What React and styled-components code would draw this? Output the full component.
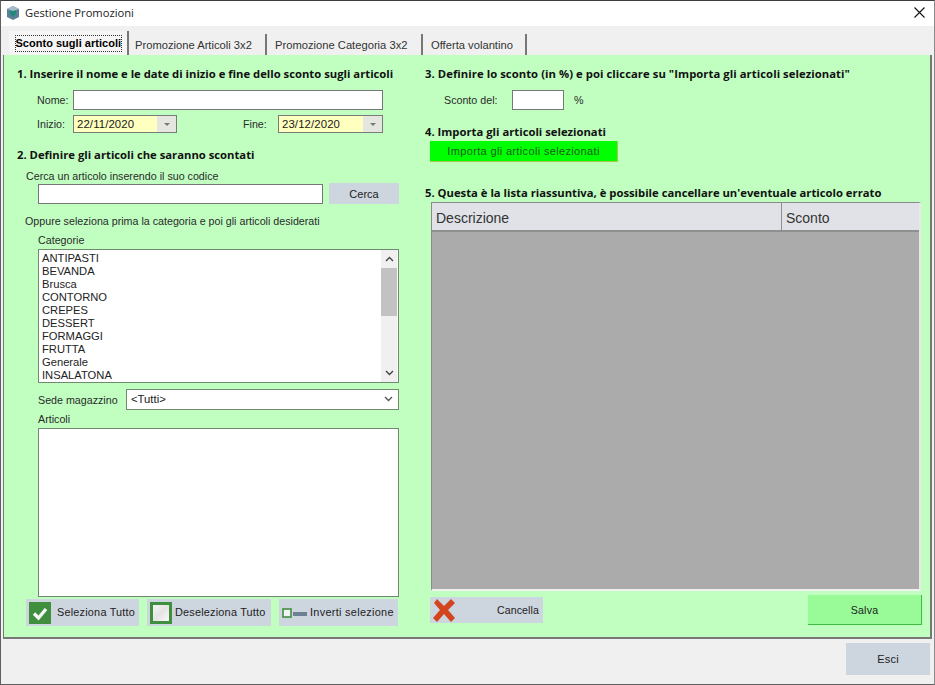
import React from "react";
import styled, { createGlobalStyle } from "styled-components";

const Global = createGlobalStyle`
  html, body { margin: 0; padding: 0; background: #f0f0f0; }
  * { box-sizing: border-box; }
`;
const font = `"Open Sans", "Noto Sans", "Liberation Sans", sans-serif`;

const Win = styled.div`
  width: 935px; height: 685px; display: flex; flex-direction: column;
  border: 1px solid #5f5f5f; border-right-color: #8a8a8a; border-top-color: #3c3c3c;
  background: #f0f0f0; overflow: hidden;
  font-family: "Liberation Sans", Arial, sans-serif; font-size: 11px; color: #1a1a1a;
`;
const TitleBar = styled.div`
  height: 25px; flex: none; background: #fff; display: flex; align-items: center; padding: 0 9px 2px 4px;
`;
const TitleText = styled.span`
  font-family: ${font}; font-size: 11.2px; margin-left: 4px; flex: 1; color: #222;
`;
const TabStrip = styled.div`
  height: 29px; flex: none; display: flex; align-items: flex-end; padding-left: 8px; background: #f0f0f0;
`;
const Tab = styled.div`
  height: ${p => (p.$active ? 24 : 21)}px; width: ${p => p.$w}px; flex: none;
  display: flex; align-items: center; justify-content: ${p => (p.$active ? "center" : "flex-start")};
  padding-left: ${p => p.$pl ?? 0}px;
  border-right: 2px solid #777;
  font-size: 11.2px; color: #333; white-space: nowrap;
  background: ${p => (p.$active ? "#f5f5f5" : "#f0f0f0")};
  font-family: "Liberation Sans", sans-serif;
`;
const ActiveLabel = styled.span`
  font-weight: 700; color: #000; border: 1px dotted #333; width: 107px; height: 17px;
  display: block; line-height: 15px; white-space: nowrap;
  font-size: 11px; letter-spacing: 0.02px;
`;
const Panel = styled.div`
  width: 929px; height: 584px; margin: 0 0 0 2px; flex: none;
  background: #c1ffc1; border-right: 2px solid #777; border-bottom: 2px solid #777; border-left: 1px solid #777;
  display: flex; overflow: hidden;
`;
const LeftCol = styled.div`
  width: 405px; flex: none; padding: 10px 0 0 13px; display: flex; flex-direction: column;
`;
const RightCol = styled.div`
  flex: 1; padding: 10px 0 0 16px; display: flex; flex-direction: column; min-width: 0;
`;
const Heading = styled.div`
  font-family: ${font}; font-weight: 700; font-size: 11.27px; line-height: 18px; height: 16px; color: #111; white-space: nowrap;
  margin-top: ${p => p.$mt ?? 0}px;
  letter-spacing: ${p => p.$ls ?? 0}px;
`;
const Row = styled.div`
  display: flex; align-items: center; height: ${p => p.$h}px; margin-top: ${p => p.$mt ?? 0}px;
  padding-left: ${p => p.$pl ?? 0}px;
`;
const Label = styled.span`
  font-size: 10.7px; color: #2a2a2a; white-space: nowrap; flex: none;
  width: ${p => (p.$w ? p.$w + "px" : "auto")};
  margin-left: ${p => p.$ml ?? 0}px;
`;
const Input = styled.div`
  height: ${p => p.$h ?? 20}px; width: ${p => p.$w}px; flex: none; background: #fff;
  border: 1px solid #767676; margin-left: ${p => p.$ml ?? 0}px;
`;
const DateBox = styled.div`
  height: 18px; width: ${p => p.$w}px; flex: none; display: flex; border: 1px solid #7a7a7a;
  background: #ffffc0; padding-left: 3px; align-items: center;
  font-size: 11.4px; letter-spacing: 0.1px;
`;
const DateBtn = styled.span`
  width: 19px; height: 16px; background: #e6e6e0; margin-left: auto; display: flex; align-items: center; justify-content: center;
  &::after { content: ""; border: 3px solid transparent; border-top: 3px solid #777; margin-top: 3px; }
`;
const GreyBtn = styled.div`
  width: ${p => p.$w}px; height: ${p => p.$h}px; flex: none; background: #cdd5de;
  display: flex; align-items: center; justify-content: center;
  margin-left: ${p => p.$ml ?? 0}px; font-size: 11px; color: #222; white-space: nowrap;
  letter-spacing: ${p => p.$ls ?? 0}px;
`;
const ListBox = styled.div`
  width: 361px; height: ${p => p.$h}px; background: #fff; border: 1px solid #6f8a6f; margin-left: 21px; flex: none;
  display: flex; overflow: hidden;
`;
const Items = styled.div`
  flex: 1; padding: 2px 0 0 3px;
`;
const Item = styled.div`
  height: 13px; line-height: 13px; font-size: 11.2px; color: #222;
`;
const Scroll = styled.div`
  width: 16px; margin-right: 1px; background: #f0f0f0; display: flex; flex-direction: column; align-items: center;
`;
const ScrollArrow = styled.div`
  height: 18px; flex: none; display: flex; align-items: center; justify-content: center;
`;
const Thumb = styled.div`
  width: 100%; height: 48px; background: #c2c2c2; flex: none;
`;
const ScrollGap = styled.div` flex: 1; `;
const Combo = styled.div`
  width: 273px; height: 21px; background: #fff; border: 1px solid #6f8a6f; margin-left: 11px; flex: none;
  display: flex; align-items: center; padding: 0 5px 2px 4px; font-size: 11.3px; justify-content: space-between;
`;
const ToolRow = styled.div`
  display: flex; height: 27px; margin-top: 2px; margin-left: 9px; gap: 8px;
`;
const ToolBtn = styled.div`
  width: ${p => p.$w}px; height: 27px; background: #cdd5de; display: flex; align-items: center; padding-left: 3px;
  font-size: 10.9px; color: #222; flex: none; white-space: nowrap; letter-spacing: ${p => p.$ls ?? 0.2}px;
`;
const ToolText = styled.span` margin-left: ${p => p.$ml}px; margin-top: -2px; `;
const GreenBtn = styled.div`
  width: 188px; height: 21px; background: #00ff00; margin: 2px 0 0 5px; display: flex; align-items: center; justify-content: center;
  font-size: 11px; color: #1c5c1c; letter-spacing: 0.35px; border-bottom: 1px solid #a8c84a; border-right: 1px solid #a8c84a;
`;
const Grid = styled.div`
  width: 490px; height: 389px; margin: 2px 0 0 6px; background: #ababab; border: 1px solid #8b8b8b;
  border-bottom: 2px solid #f0f0f0; border-right: 2px solid #e8e8e8; display: flex; flex-direction: column; flex: none;
`;
const GridHead = styled.div`
  height: 29px; flex: none; display: flex; background: #e0e2e7; border-bottom: 2px solid #8f8f8f;
  font-size: 14px; color: #333;
`;
const GridCol = styled.div`
  width: ${p => p.$w}px; flex: ${p => (p.$w ? "none" : 1)}; display: flex; align-items: center; padding: 2px 0 0 4px;
  border-right: ${p => (p.$w ? "1px solid #8f8f8f" : "none")};
`;
const BottomRow = styled.div`
  display: flex; margin: 4px 0 0 5px; width: 492px; justify-content: space-between; align-items: flex-start;
`;
const CancelBtn = styled.div`
  width: 113px; height: 26px; background: #cdd5de; margin-top: 2px; display: flex; align-items: center; padding-left: 1px;
  font-size: 10.6px; color: #222; letter-spacing: 0.1px;
`;
const CancelText = styled.span` margin-left: auto; margin-right: 4px; margin-top: -1px; `;
const SaveBtn = styled.div`
  width: 114px; height: 30px; background: #98fb98; border-bottom: 1px solid #3fbf3f; border-right: 1px solid #3fbf3f;
  display: flex; align-items: center; justify-content: center; font-size: 10.6px; color: #222; letter-spacing: 0.2px;
`;
const Footer = styled.div`
  flex: 1; display: flex; justify-content: flex-end; padding: 4px 4px 0 0; background: #f0f0f0;
`;

const Logo = () => (
  <svg width="16" height="16" viewBox="0 0 16 16">
    <path d="M8 1l6 3v8l-6 3-6-3V4z" fill="#5f7f96" />
    <path d="M8 4l3 1.5V9L8 12 5 9V5.5z" fill="#1f8a7a" />
    <path d="M8 1l6 3-6 2-6-2z" fill="#a9bccb" />
  </svg>
);
const CloseX = () => (
  <svg width="11" height="11" viewBox="0 0 11 11">
    <path d="M.5.5l10 10M10.5.5l-10 10" stroke="#111" strokeWidth="1.1" fill="none" />
  </svg>
);
const Chev = ({ up, color = "#444", w = 9 }) => (
  <svg width={w} height="6" viewBox="0 0 9 6">
    <path d={up ? "M1 5l3.5-3.5L8 5" : "M1 1l3.5 3.5L8 1"} stroke={color} strokeWidth="1.4" fill="none" />
  </svg>
);
const CheckIcon = () => (
  <svg width="22" height="22" viewBox="0 0 22 22">
    <rect width="22" height="22" fill="#3f8f3f" />
    <path d="M5 11.5l4.5 4.5L17 7" stroke="#f4f7f4" strokeWidth="3.4" fill="none" />
  </svg>
);
const EmptyIcon = () => (
  <svg width="22" height="22" viewBox="0 0 22 22">
    <defs>
      <linearGradient id="eg" x1="0" y1="0" x2="1" y2="1">
        <stop offset="0" stopColor="#f8f8f8" /><stop offset="0.5" stopColor="#e4e4e4" /><stop offset="1" stopColor="#fdfdfd" />
      </linearGradient>
    </defs>
    <rect x="1.5" y="1.5" width="19" height="19" fill="url(#eg)" stroke="#3f8f3f" strokeWidth="3" />
  </svg>
);
const InvertIcon = () => (
  <svg width="26" height="12" viewBox="0 0 26 12">
    <rect x="1" y="2" width="8" height="8" fill="#f2f2f2" stroke="#3f8f3f" strokeWidth="1.6" />
    <rect x="11" y="5" width="14" height="4" fill="#6d8196" />
  </svg>
);
const RedX = () => (
  <svg width="26" height="26" viewBox="0 0 26 26">
    <path d="M3 6l3-4 7 7 7-7 4 4-7 7 7 8-4 4-7-8-7 8-4-4 7-8z" fill="#d2451e" />
  </svg>
);

const cats = ["ANTIPASTI", "BEVANDA", "Brusca", "CONTORNO", "CREPES", "DESSERT", "FORMAGGI", "FRUTTA", "Generale", "INSALATONA"];

export default function App() {
  return (
    <Win>
      <Global />
      <TitleBar>
        <Logo />
        <TitleText>Gestione Promozioni</TitleText>
        <CloseX />
      </TitleBar>
      <TabStrip>
        <Tab $active $w={120}><ActiveLabel>Sconto sugli articoli</ActiveLabel></Tab>
        <Tab $w={138} $pl={6}>Promozione Articoli 3x2</Tab>
        <Tab $w={156} $pl={8}>Promozione Categoria 3x2</Tab>
        <Tab $w={104} $pl={8}>Offerta volantino</Tab>
      </TabStrip>
      <Panel>
        <LeftCol>
          <Heading>1. Inserire il nome e le date di inizio e fine dello sconto sugli articoli</Heading>
          <Row $h={20} $mt={9}>
            <Label $w={36} $ml={20}>Nome:</Label>
            <Input $w={310} />
          </Row>
          <Row $h={18} $mt={5}>
            <Label $w={36} $ml={20}>Inizio:</Label>
            <DateBox $w={104}>22/11/2020<DateBtn /></DateBox>
            <Label $w={35} $ml={66}>Fine:</Label>
            <DateBox $w={105}>23/12/2020<DateBtn /></DateBox>
          </Row>
          <Heading $mt={13}>2. Definire gli articoli che saranno scontati</Heading>
          <Row $h={14} $mt={7} $pl={9}><Label>Cerca un articolo inserendo il suo codice</Label></Row>
          <Row $h={21} $pl={21}>
            <Input $w={285} />
            <GreyBtn $w={70} $h={21} $ml={6}>Cerca</GreyBtn>
          </Row>
          <Row $h={14} $mt={10} $pl={8}><Label>Oppure seleziona prima la categoria e poi gli articoli desiderati</Label></Row>
          <Row $h={14} $mt={5} $pl={21}><Label>Categorie</Label></Row>
          <Row $h={134} $mt={2}>
            <ListBox $h={134}>
              <Items>{cats.map(c => <Item key={c}>{c}</Item>)}</Items>
              <Scroll>
                <ScrollArrow><Chev up /></ScrollArrow>
                <Thumb />
                <ScrollGap />
                <ScrollArrow><Chev /></ScrollArrow>
              </Scroll>
            </ListBox>
          </Row>
          <Row $h={21} $mt={6} $pl={21}>
            <Label $w={77}>Sede magazzino</Label>
            <Combo><span>&lt;Tutti&gt;</span><Chev color="#555" /></Combo>
          </Row>
          <Row $h={14} $mt={2} $pl={21}><Label>Articoli</Label></Row>
          <Row $h={169} $mt={2}><ListBox $h={169} /></Row>
          <ToolRow>
            <ToolBtn $w={113}><CheckIcon /><ToolText $ml={6}>Seleziona Tutto</ToolText></ToolBtn>
            <ToolBtn $w={124}><EmptyIcon /><ToolText $ml={3}>Deseleziona Tutto</ToolText></ToolBtn>
            <ToolBtn $w={119} $ls={0.3}><InvertIcon /><ToolText $ml={2}>Inverti selezione</ToolText></ToolBtn>
          </ToolRow>
        </LeftCol>
        <RightCol>
          <Heading $ls={0.06}>3. Definire lo sconto (in %) e poi cliccare su "Importa gli articoli selezionati"</Heading>
          <Row $h={20} $mt={9}>
            <Label $ml={19} $w={68}>Sconto del:</Label>
            <Input $w={52} />
            <Label $ml={10}>%</Label>
          </Row>
          <Heading $mt={13}>4. Importa gli articoli selezionati</Heading>
          <GreenBtn>Importa gli articoli selezionati</GreenBtn>
          <Heading $mt={22}>5. Questa è la lista riassuntiva, è possibile cancellare un'eventuale articolo errato</Heading>
          <Grid>
            <GridHead>
              <GridCol $w={350}>Descrizione</GridCol>
              <GridCol>Sconto</GridCol>
            </GridHead>
          </Grid>
          <BottomRow>
            <CancelBtn><RedX /><CancelText>Cancella</CancelText></CancelBtn>
            <SaveBtn>Salva</SaveBtn>
          </BottomRow>
        </RightCol>
      </Panel>
      <Footer>
        <GreyBtn $w={84} $h={32} $ls={0.2}>Esci</GreyBtn>
      </Footer>
    </Win>
  );
}
